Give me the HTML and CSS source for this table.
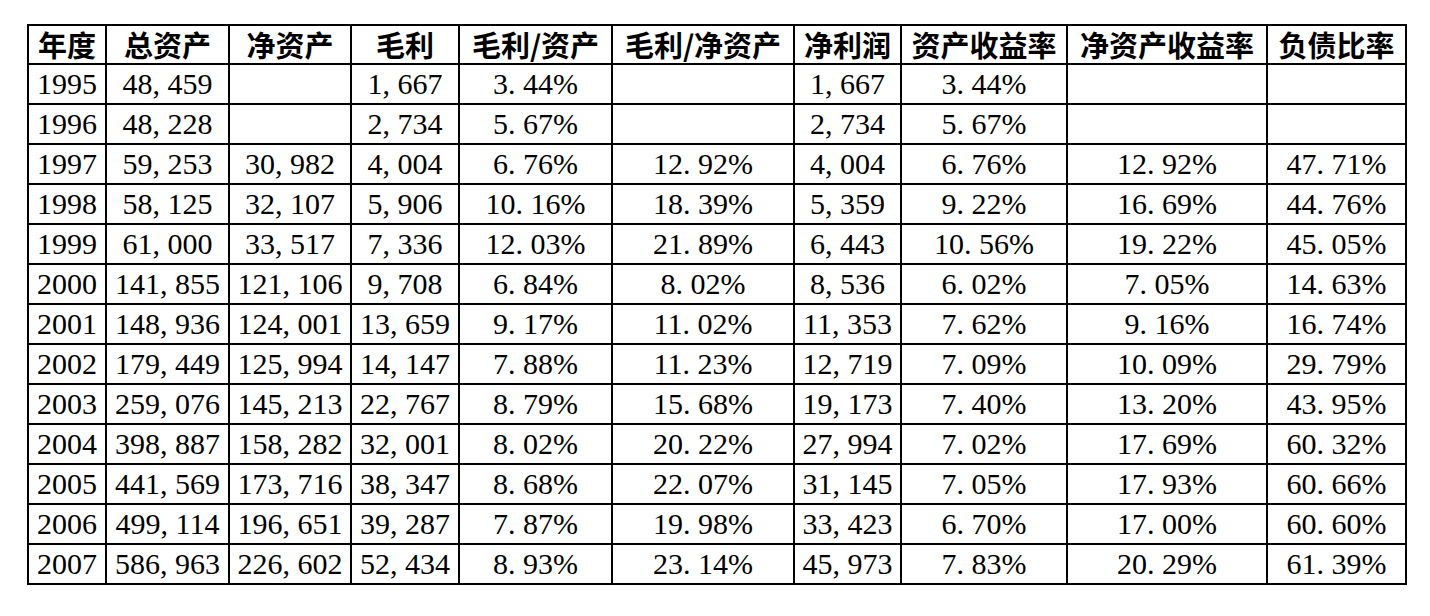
FILE: index.html
```html
<!DOCTYPE html>
<html lang="zh-CN">
<head>
<meta charset="utf-8">
<title>财务数据</title>
<link rel="stylesheet" href="styles.css">
</head>
<body>
<table class="fin">
  <colgroup>
    <col class="c1"><col class="c2"><col class="c3"><col class="c4"><col class="c5">
    <col class="c6"><col class="c7"><col class="c8"><col class="c9"><col class="c10">
  </colgroup>
  <thead>
    <tr>
      <th>年度</th><th>总资产</th><th>净资产</th><th>毛利</th><th>毛利/资产</th>
      <th>毛利/净资产</th><th>净利润</th><th>资产收益率</th><th>净资产收益率</th><th>负债比率</th>
    </tr>
  </thead>
  <tbody>
    <tr><td>1995</td><td>48, 459</td><td></td><td>1, 667</td><td>3. 44%</td><td></td><td>1, 667</td><td>3. 44%</td><td></td><td></td></tr>
    <tr><td>1996</td><td>48, 228</td><td></td><td>2, 734</td><td>5. 67%</td><td></td><td>2, 734</td><td>5. 67%</td><td></td><td></td></tr>
    <tr><td>1997</td><td>59, 253</td><td>30, 982</td><td>4, 004</td><td>6. 76%</td><td>12. 92%</td><td>4, 004</td><td>6. 76%</td><td>12. 92%</td><td>47. 71%</td></tr>
    <tr><td>1998</td><td>58, 125</td><td>32, 107</td><td>5, 906</td><td>10. 16%</td><td>18. 39%</td><td>5, 359</td><td>9. 22%</td><td>16. 69%</td><td>44. 76%</td></tr>
    <tr><td>1999</td><td>61, 000</td><td>33, 517</td><td>7, 336</td><td>12. 03%</td><td>21. 89%</td><td>6, 443</td><td>10. 56%</td><td>19. 22%</td><td>45. 05%</td></tr>
    <tr><td>2000</td><td>141, 855</td><td>121, 106</td><td>9, 708</td><td>6. 84%</td><td>8. 02%</td><td>8, 536</td><td>6. 02%</td><td>7. 05%</td><td>14. 63%</td></tr>
    <tr><td>2001</td><td>148, 936</td><td>124, 001</td><td>13, 659</td><td>9. 17%</td><td>11. 02%</td><td>11, 353</td><td>7. 62%</td><td>9. 16%</td><td>16. 74%</td></tr>
    <tr><td>2002</td><td>179, 449</td><td>125, 994</td><td>14, 147</td><td>7. 88%</td><td>11. 23%</td><td>12, 719</td><td>7. 09%</td><td>10. 09%</td><td>29. 79%</td></tr>
    <tr><td>2003</td><td>259, 076</td><td>145, 213</td><td>22, 767</td><td>8. 79%</td><td>15. 68%</td><td>19, 173</td><td>7. 40%</td><td>13. 20%</td><td>43. 95%</td></tr>
    <tr><td>2004</td><td>398, 887</td><td>158, 282</td><td>32, 001</td><td>8. 02%</td><td>20. 22%</td><td>27, 994</td><td>7. 02%</td><td>17. 69%</td><td>60. 32%</td></tr>
    <tr><td>2005</td><td>441, 569</td><td>173, 716</td><td>38, 347</td><td>8. 68%</td><td>22. 07%</td><td>31, 145</td><td>7. 05%</td><td>17. 93%</td><td>60. 66%</td></tr>
    <tr><td>2006</td><td>499, 114</td><td>196, 651</td><td>39, 287</td><td>7. 87%</td><td>19. 98%</td><td>33, 423</td><td>6. 70%</td><td>17. 00%</td><td>60. 60%</td></tr>
    <tr><td>2007</td><td>586, 963</td><td>226, 602</td><td>52, 434</td><td>8. 93%</td><td>23. 14%</td><td>45, 973</td><td>7. 83%</td><td>20. 29%</td><td>61. 39%</td></tr>
  </tbody>
</table>
</body>
</html>
```
FILE: styles.css
```css
html, body {
  margin: 0;
  padding: 0;
  background: #ffffff;
}
body {
  padding: 24px 0 0 27px;
}
.fin {
  border-collapse: collapse;
  table-layout: fixed;
  width: 1378px;
  border: 2px solid #000;
  color: #000;
}
.c1 { width: 78px; }
.c2 { width: 123px; }
.c3 { width: 122px; }
.c4 { width: 108px; }
.c5 { width: 153px; }
.c6 { width: 182px; }
.c7 { width: 107px; }
.c8 { width: 166px; }
.c9 { width: 200px; }
.c10 { width: 139px; }
.fin th,
.fin td {
  border: 2px solid #000;
  padding: 0;
  text-align: center;
  vertical-align: middle;
  white-space: nowrap;
}
.fin th {
  height: 37px;
  font-family: "Noto Sans CJK SC", "Noto Sans", sans-serif;
  font-weight: 700;
  font-size: 29px;
  line-height: 37px;
}
.fin td {
  height: 38px;
  font-family: "Liberation Serif", "Noto Sans CJK SC", serif;
  font-size: 30px;
  line-height: 38px;
}
```
